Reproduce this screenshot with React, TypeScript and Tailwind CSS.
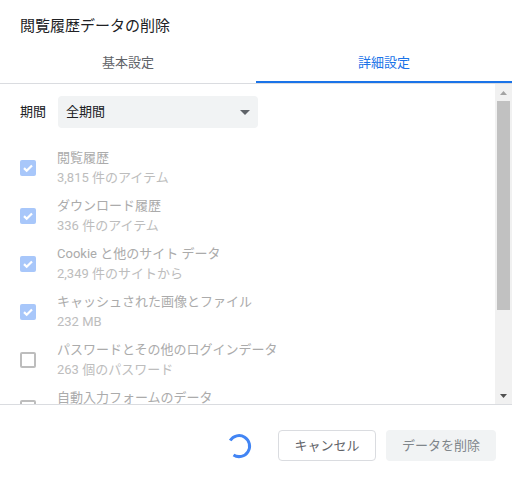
import React from 'react'

const items = [
  { title: '閲覧履歴', sub: '3,815 件のアイテム', checked: true },
  { title: 'ダウンロード履歴', sub: '336 件のアイテム', checked: true },
  { title: 'Cookie と他のサイト データ', sub: '2,349 件のサイトから', checked: true },
  { title: 'キャッシュされた画像とファイル', sub: '232 MB', checked: true },
  { title: 'パスワードとその他のログインデータ', sub: '263 個のパスワード', checked: false },
  { title: '自動入力フォームのデータ', sub: '', checked: false },
]

function Checkbox({ checked }: { checked: boolean }) {
  if (checked) {
    return (
      <div className="w-4 h-4 rounded-[2px] bg-[#a8c7fa] flex items-center justify-center shrink-0">
        <svg width="12" height="12" viewBox="0 0 12 12">
          <path d="M2 6.1 L4.7 8.8 L10 3.4" fill="none" stroke="white" strokeWidth="2.2" />
        </svg>
      </div>
    )
  }
  return <div className="w-4 h-4 rounded-[2px] border-2 border-[#bdbdbd] shrink-0" />
}

export default function App() {
  return (
    <div
      className="w-[512px] h-[479px] bg-white flex flex-col overflow-hidden"
      style={{ fontFamily: '"Roboto", "Noto Sans CJK JP", sans-serif' }}
    >
      <div className="pl-5 pt-4 h-[45px] text-[15px] leading-5 text-[#202124]">閲覧履歴データの削除</div>

      <div className="flex h-[39px] border-b border-[#dadce0]">
        <div className="flex-1 flex items-center justify-center text-[13px] text-[#5f6368] pb-[2px]">基本設定</div>
        <div className="flex-1 flex items-center justify-center text-[13px] text-[#1a73e8] border-b-2 border-[#1a73e8]">
          詳細設定
        </div>
      </div>

      <div className="flex h-[321px] border-b border-[#dadce0]">
        <div className="flex-1 overflow-hidden">
          <div className="flex items-center pl-5 pt-3 h-[44px]">
            <span className="text-[13px] text-[#202124] w-[38px]">期間</span>
            <div className="w-[200px] h-8 rounded bg-[#f1f3f4] flex items-center justify-between pl-2 pr-[8px]">
              <span className="text-[13px] text-[#202124]">全期間</span>
              <svg width="10" height="5" viewBox="0 0 10 5">
                <path d="M0 0 L10 0 L5 5 Z" fill="#5f6368" />
              </svg>
            </div>
          </div>
          <div className="pt-4">
            {items.map((it) => (
              <div key={it.title} className="flex items-center h-12 pl-5">
                <Checkbox checked={it.checked} />
                <div className="pl-[21px] text-[13px] leading-5">
                  <div className="text-[#ababab]">{it.title}</div>
                  <div className="text-[#bdbdbd] h-5">{it.sub}</div>
                </div>
              </div>
            ))}
          </div>
        </div>
        <div className="w-[17px] bg-[#f1f1f1] flex flex-col items-center">
          <div className="h-[17px] flex items-center justify-center">
            <svg width="7" height="4" viewBox="0 0 7 4">
              <path d="M0 4 L7 4 L3.5 0 Z" fill="#a3a3a3" />
            </svg>
          </div>
          <div className="w-[13px] h-[209px] bg-[#c1c1c1]" />
          <div className="flex-1" />
          <div className="h-[17px] flex items-center justify-center">
            <svg width="7" height="4" viewBox="0 0 7 4">
              <path d="M0 0 L7 0 L3.5 4 Z" fill="#505050" />
            </svg>
          </div>
        </div>
      </div>

      <div className="flex items-center justify-end pr-4 pt-[25px] gap-[10px]">
        <svg width="28" height="28" viewBox="0 0 28 28" className="mr-[15px]">
          <path
            d="M5.2 8.5 A10.5 10.5 0 1 1 8.5 23"
            fill="none"
            stroke="#4285f4"
            strokeWidth="3"
          />
        </svg>
        <button className="h-[31px] w-[98px] rounded border border-[#dadce0] bg-white text-[13px] text-[#5f6368]">
          キャンセル
        </button>
        <button className="h-[31px] w-[110px] rounded bg-[#f1f3f4] text-[13px] text-[#80868b]">データを削除</button>
      </div>
    </div>
  )
}
